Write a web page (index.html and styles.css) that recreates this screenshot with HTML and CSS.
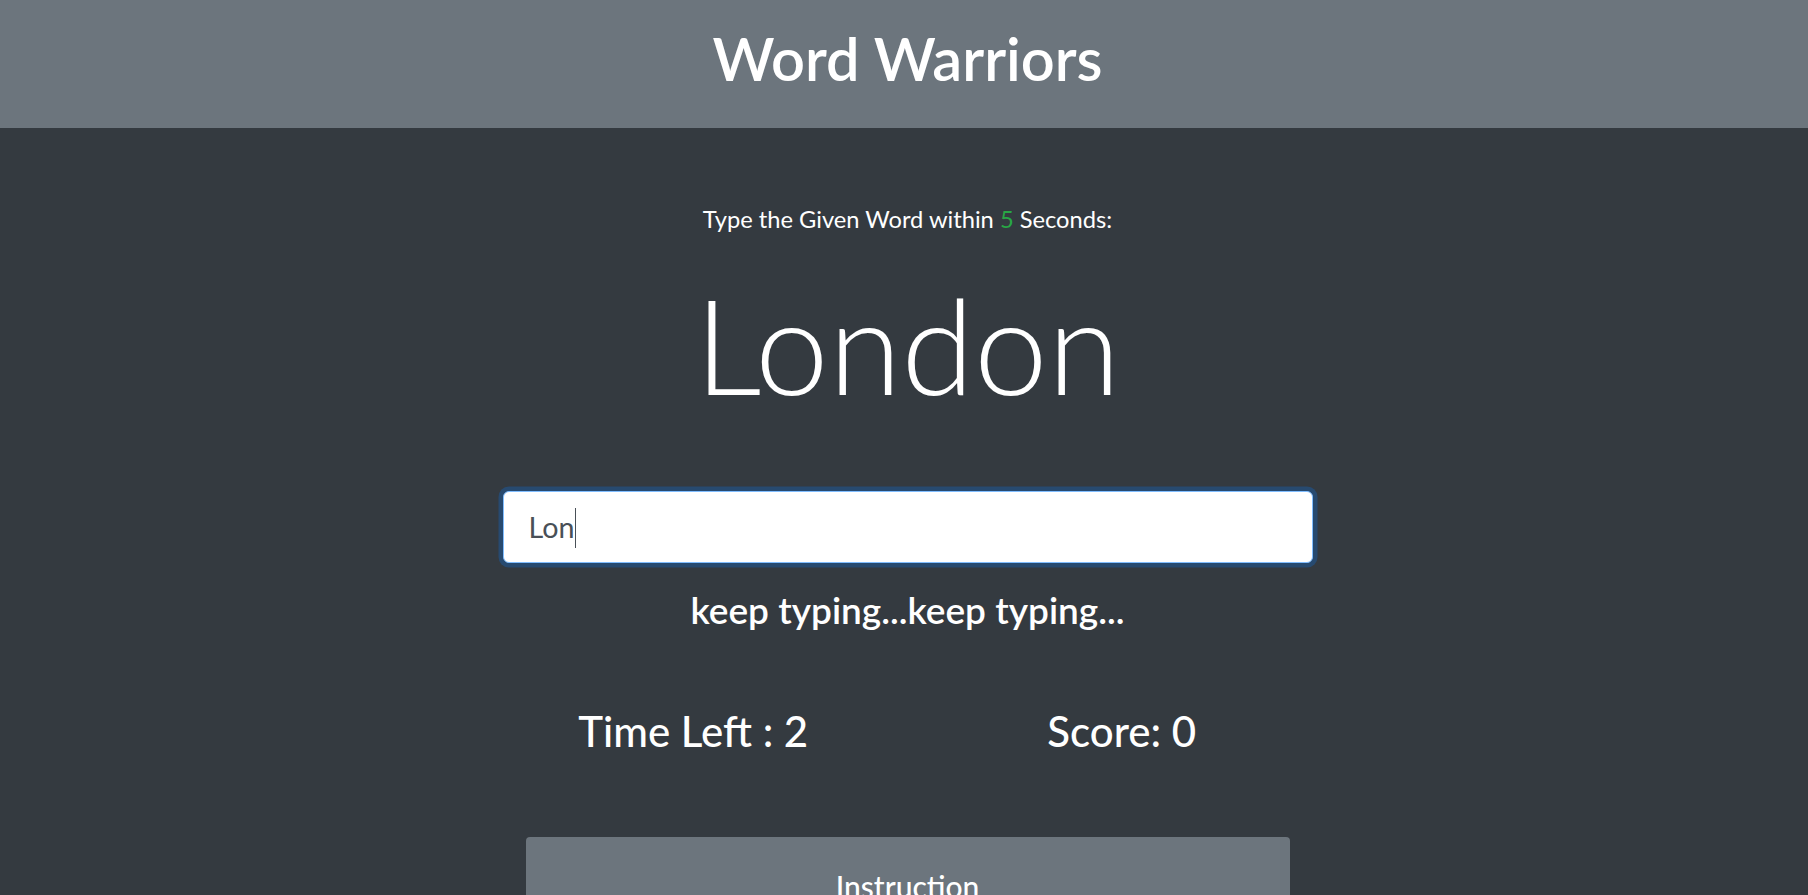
FILE: index.html
```html
<!DOCTYPE html>
<html lang="en">
<head>
<meta charset="utf-8">
<title>Word Warriors</title>
<link rel="stylesheet" href="styles.css">
</head>
<body>
<header class="site-header">
  <h1 class="site-title">Word Warriors</h1>
</header>
<main class="game">
  <p class="lead">Type the Given Word within <span class="seconds">5</span> Seconds:</p>
  <h2 class="current-word">London</h2>
  <div class="word-input"><span class="typed">Lon</span><span class="caret"></span></div>
  <h4 class="message">keep typing...keep typing...</h4>
  <div class="stats">
    <h3 class="stat">Time Left : <span class="time">2</span></h3>
    <h3 class="stat">Score: <span class="score">0</span></h3>
  </div>
  <div class="instructions">
    <h5 class="instructions-title">Instruction</h5>
  </div>
</main>
</body>
</html>
```
FILE: styles.css
```css
* { box-sizing: border-box; }
html, body { margin: 0; padding: 0; }
body {
  background: #343a40;
  color: #fff;
  font-family: "Lato", "Open Sans", sans-serif;
  min-height: 100vh;
  overflow: hidden;
}
.site-header {
  background: #6c757d;
  height: 128px;
  padding: 23px 0 0 7px;
  text-align: center;
}
.site-title {
  margin: 0;
  font-size: 59.5px;
  font-weight: 600;
  line-height: 1.2;
}
.game {
  display: flex;
  flex-direction: column;
  align-items: center;
  padding-left: 7px;
  text-align: center;
}
.lead {
  margin: 76.6px 0 0;
  font-size: 23.7px;
  font-weight: 400;
  line-height: 1.2;
}
.seconds { color: #28a745; }
.current-word {
  margin: 31.8px 0 0;
  font-size: 132px;
  font-weight: 300;
  line-height: 1.2;
}
.word-input {
  margin-top: 67.8px;
  width: 810px;
  height: 72px;
  display: flex;
  align-items: center;
  padding: 1px 25px 0;
  background: #fff;
  border: 1px solid #80bdff;
  border-radius: 6px;
  box-shadow: 0 0 0 4.5px rgba(0, 123, 255, 0.25);
  color: #495057;
  font-size: 28.7px;
  line-height: 1.2;
  text-align: left;
}
.caret {
  display: inline-block;
  width: 1px;
  height: 40px;
  margin-left: 1px;
  background: #495057;
}
.message {
  margin: 24.5px 0 0;
  font-size: 37px;
  font-weight: 600;
  line-height: 1.2;
}
.stats {
  margin-top: 73.6px;
  display: grid;
  grid-template-columns: 428.5px 428.5px;
}
.stat {
  margin: 0;
  font-size: 42px;
  font-weight: 500;
  line-height: 1.2;
}
.instructions {
  margin-top: 81px;
  width: 764px;
  background: #6c757d;
  border-radius: 4px;
  padding-top: 31px;
  min-height: 120px;
}
.instructions-title {
  margin: 0;
  font-size: 30px;
  font-weight: 500;
  line-height: 1.2;
}
```
